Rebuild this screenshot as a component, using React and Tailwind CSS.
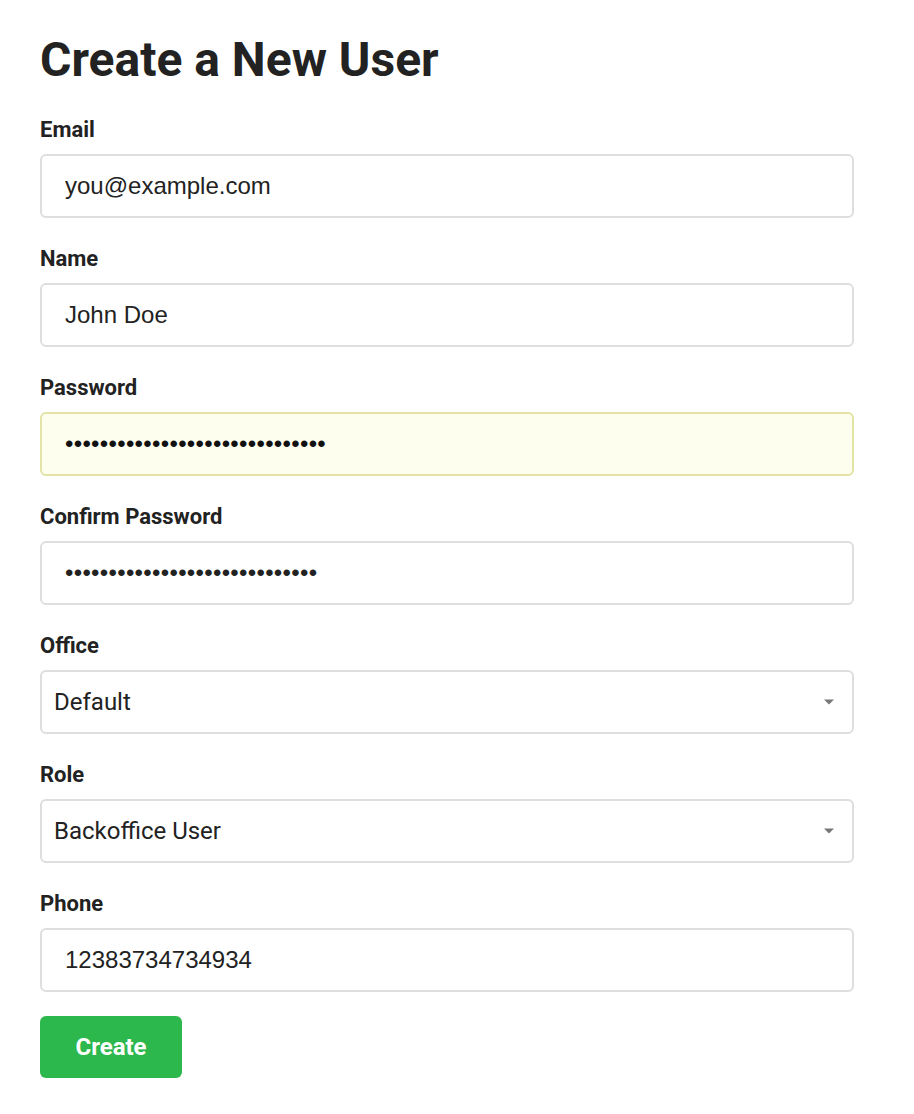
import { useState } from "react";

const fieldInput =
  "w-full h-16 px-[23px] border-2 border-[#dedede] rounded-md bg-white text-[24px] text-[#222] outline-none font-['Liberation_Sans',sans-serif]";

const Field = ({ label, children, last }) => (
  <div className={last ? "mb-6" : "mb-[29px]"}>
    <label className="block text-[22px] leading-6 font-bold text-[#222] mb-3">
      {label}
    </label>
    {children}
  </div>
);

const SelectField = ({ value, options, onChange }) => (
  <div className="relative">
    <select
      value={value}
      onChange={onChange}
      className="w-full h-16 pl-3 pr-10 appearance-none border-2 border-[#dedede] rounded-md bg-white text-[24px] text-[#222] outline-none font-['Roboto',sans-serif]"
    >
      {options.map((o) => (
        <option key={o}>{o}</option>
      ))}
    </select>
    <span className="absolute right-[20px] top-1/2 -translate-y-1/2 w-0 h-0 border-l-[5px] border-r-[5px] border-t-[5px] border-l-transparent border-r-transparent border-t-[#777] pointer-events-none" />
  </div>
);

const App = () => {
  const [formData, setFormData] = useState({
    email: "you@example.com",
    name: "John Doe",
    password: "aaaaaaaaaaaaaaaaaaaaaaaaaaaaaa",
    confirm: "aaaaaaaaaaaaaaaaaaaaaaaaaaaaa",
    office: "Default",
    role: "Backoffice User",
    phone: "12383734734934",
  });

  const handleChange = (e) => {
    setFormData({ ...formData, [e.target.name]: e.target.value });
  };

  return (
    <div className="min-h-screen bg-white px-10 pt-[30px] font-['Roboto',sans-serif]">
      <h1 className="text-[48px] leading-[60px] font-bold text-[#222] mb-7">
        Create a New User
      </h1>
      <form className="w-[814px]" onSubmit={(e) => e.preventDefault()}>
        <Field label="Email">
          <input
            type="text"
            name="email"
            value={formData.email}
            onChange={handleChange}
            className={fieldInput}
          />
        </Field>
        <Field label="Name">
          <input
            type="text"
            name="name"
            value={formData.name}
            onChange={handleChange}
            className={fieldInput}
          />
        </Field>
        <Field label="Password">
          <input
            type="password"
            name="password"
            value={formData.password}
            onChange={handleChange}
            className="w-full h-16 px-[23px] border-2 border-[#e3e3a6] rounded-md bg-[#fefeee] text-[24px] tracking-[0.3px] text-[#111] outline-none font-['Liberation_Sans',sans-serif]"
          />
        </Field>
        <Field label="Confirm Password">
          <input
            type="password"
            name="confirm"
            value={formData.confirm}
            onChange={handleChange}
            className={fieldInput + " tracking-[0.3px]"}
          />
        </Field>
        <Field label="Office">
          <SelectField
            value={formData.office}
            options={["Default"]}
            onChange={(e) => setFormData({ ...formData, office: e.target.value })}
          />
        </Field>
        <Field label="Role">
          <SelectField
            value={formData.role}
            options={["Backoffice User", "Admin"]}
            onChange={(e) => setFormData({ ...formData, role: e.target.value })}
          />
        </Field>
        <Field label="Phone" last>
          <input
            type="text"
            name="phone"
            value={formData.phone}
            onChange={handleChange}
            className={fieldInput}
          />
        </Field>
        <button
          type="submit"
          className="w-[142px] h-[62px] rounded-md bg-[#2db84d] text-white text-[24px] font-bold"
        >
          Create
        </button>
      </form>
    </div>
  );
};

export default App;
